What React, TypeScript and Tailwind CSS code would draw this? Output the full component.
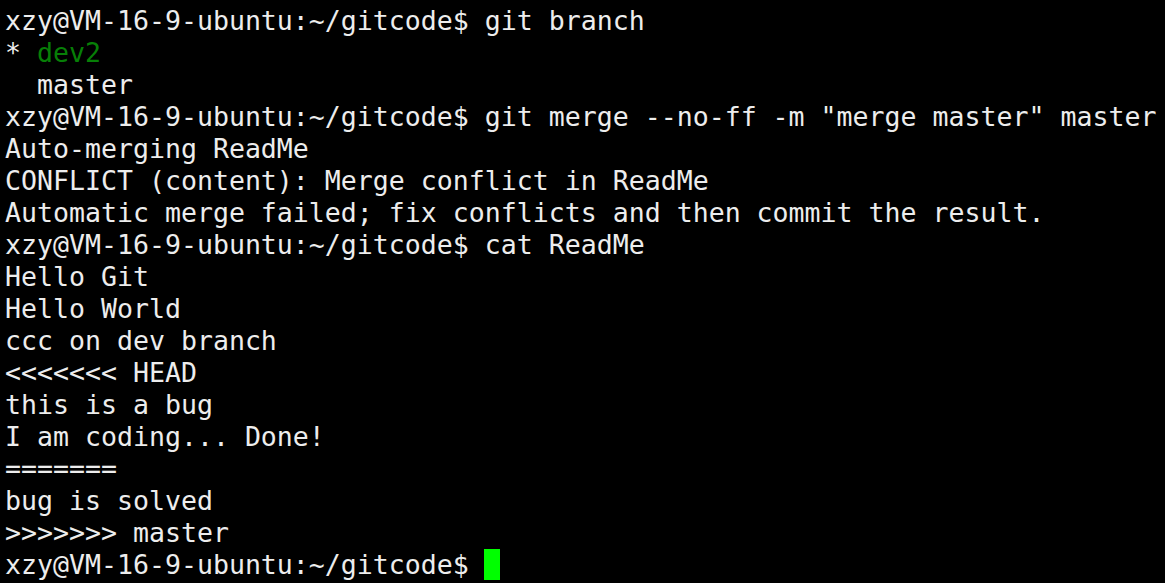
const prompt = 'xzy@VM-16-9-ubuntu:~/gitcode$ ';

const lines: { text: string; green?: string }[] = [
  { text: prompt + 'git branch' },
  { text: '* ', green: 'dev2' },
  { text: '  master' },
  { text: prompt + 'git merge --no-ff -m "merge master" master' },
  { text: 'Auto-merging ReadMe' },
  { text: 'CONFLICT (content): Merge conflict in ReadMe' },
  { text: 'Automatic merge failed; fix conflicts and then commit the result.' },
  { text: prompt + 'cat ReadMe' },
  { text: 'Hello Git' },
  { text: 'Hello World' },
  { text: 'ccc on dev branch' },
  { text: '<<<<<<< HEAD' },
  { text: 'this is a bug' },
  { text: 'I am coding... Done!' },
  { text: '=======' },
  { text: 'bug is solved' },
  { text: '>>>>>>> master' },
];

const App = () => {
  return (
    <div className="w-[1165px] h-[583px] overflow-hidden bg-black pt-[5px] pl-[5px] text-[#ededed] font-['DejaVu_Sans_Mono',monospace] text-[26.57px] leading-[32px] whitespace-pre">
      {lines.map((line, i) => (
        <div key={i} className="h-[32px]">
          {line.text}
          {line.green && <span className="text-[#077f07]">{line.green}</span>}
        </div>
      ))}
      <div className="h-[32px] flex items-center">
        <span>{prompt}</span>
        <span className="w-[16px] h-[31px] bg-[#00ff00] -ml-[17px] translate-x-[16px] -translate-y-[1px]" />
      </div>
    </div>
  );
};

export default App;
